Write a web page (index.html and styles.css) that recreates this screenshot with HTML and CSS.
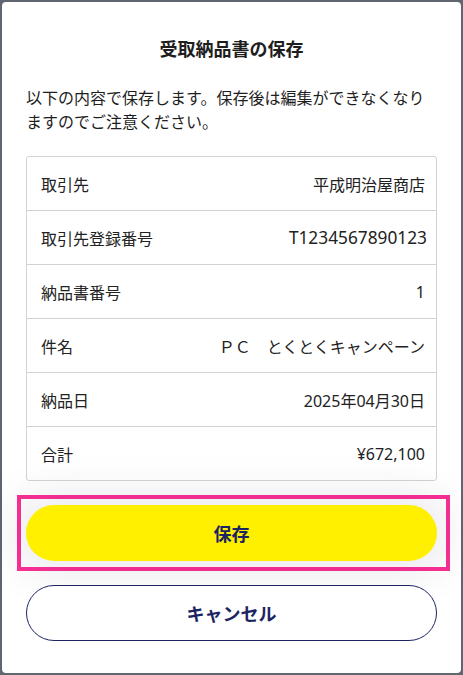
FILE: index.html
```html
<!DOCTYPE html>
<html lang="ja">
<head>
<meta charset="utf-8">
<title>受取納品書の保存</title>
<link rel="stylesheet" href="styles.css">
</head>
<body>
<div class="modal">
  <h1 class="title">受取納品書の保存</h1>
  <p class="note">以下の内容で保存します。保存後は編集ができなくなりますのでご注意ください。</p>
  <div class="table">
    <div class="row"><span class="label">取引先</span><span class="value">平成明治屋商店</span></div>
    <div class="row"><span class="label">取引先登録番号</span><span class="value value-code">T1234567890123</span></div>
    <div class="row"><span class="label">納品書番号</span><span class="value">1</span></div>
    <div class="row"><span class="label">件名</span><span class="value">ＰＣ　とくとくキャンペーン</span></div>
    <div class="row"><span class="label">納品日</span><span class="value">2025年04月30日</span></div>
    <div class="row"><span class="label">合計</span><span class="value">¥672,100</span></div>
  </div>
  <div class="actions">
    <div class="highlight">
      <button class="btn btn-save">保存</button>
    </div>
    <button class="btn btn-cancel">キャンセル</button>
  </div>
</div>
</body>
</html>
```

FILE: styles.css
```css
html, body {
  margin: 0;
  padding: 0;
  background: #5f6670;
  height: 675px;
  overflow: hidden;
}

body {
  font-family: "Noto Sans", "Noto Sans CJK JP", sans-serif;
  color: #222;
}

.modal {
  margin: 2px 2px 0 2px;
  height: 671px;
  box-sizing: border-box;
  background: #fff;
  border-radius: 4px;
  padding: 35px 24px 0 24px;
  display: flex;
  flex-direction: column;
}

.title {
  margin: 0;
  font-size: 18px;
  line-height: 24px;
  font-weight: 700;
  text-align: center;
  color: #1e1e1e;
}

.note {
  margin: 25px 0 0 0;
  font-size: 16px;
  line-height: 24px;
  color: #1e1e1e;
}

.table {
  margin-top: 22px;
  border: 1px solid #d2d2d6;
  border-radius: 3px;
  display: flex;
  flex-direction: column;
}

.row {
  height: 53px;
  display: flex;
  align-items: center;
  justify-content: space-between;
  padding: 0 11px 0 14px;
  font-size: 16px;
  color: #222;
}

.row + .row {
  border-top: 1px solid #d2d2d6;
}

.value-code {
  font-size: 17.3px;
  margin-right: -2px;
}

.actions {
  display: flex;
  flex-direction: column;
  margin-top: 14px;
}

.highlight {
  margin: 0 -13px 0 -9px;
  border: 4px solid #fb2f95;
  padding: 6px 9px 6px 5px;
}

.btn {
  display: block;
  width: 100%;
  height: 56px;
  border-radius: 28px;
  font-family: "Noto Sans CJK JP", "Noto Sans", sans-serif;
  font-size: 18px;
  font-weight: 700;
  color: #1c2462;
  cursor: pointer;
}

.btn-save {
  background: #fff000;
  border: none;
  box-shadow: 0 0 40px 14px rgba(40, 40, 80, 0.09);
}

.btn-cancel {
  margin-top: 14px;
  background: #fff;
  border: 1px solid #1c2462;
}
```
